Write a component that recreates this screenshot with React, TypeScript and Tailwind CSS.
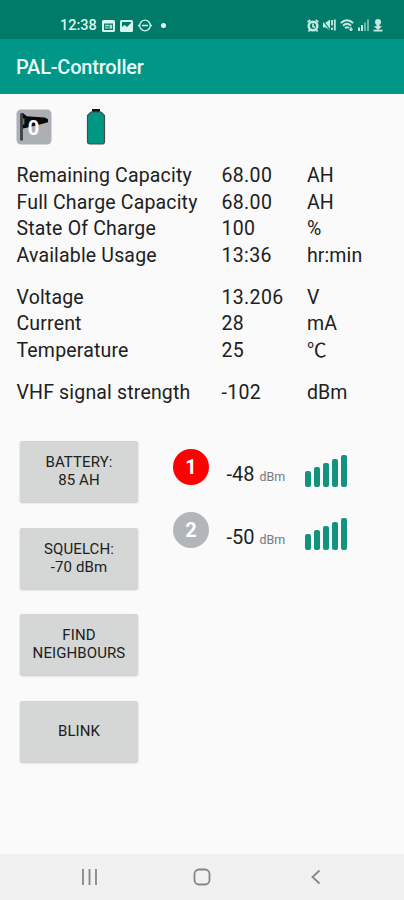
import React from "react";

type Reading = { label: string; value: string; unit: string };

const readings: Reading[][] = [
  [
    { label: "Remaining Capacity", value: "68.00", unit: "AH" },
    { label: "Full Charge Capacity", value: "68.00", unit: "AH" },
    { label: "State Of Charge", value: "100", unit: "%" },
    { label: "Available Usage", value: "13:36", unit: "hr:min" },
  ],
  [
    { label: "Voltage", value: "13.206", unit: "V" },
    { label: "Current", value: "28", unit: "mA" },
    { label: "Temperature", value: "25", unit: "℃" },
  ],
  [{ label: "VHF signal strength", value: "-102", unit: "dBm" }],
];

const buttons: string[][] = [
  ["BATTERY:", "85 AH"],
  ["SQUELCH:", "-70 dBm"],
  ["FIND", "NEIGHBOURS"],
  ["BLINK"],
];

function StatusBar() {
  return (
    <header className="flex h-[39px] items-end justify-between bg-[#007a69] pb-[5px] pl-[60px] pr-[21px] text-[#d8f5ee]">
      <div className="flex h-[17px] items-center">
        <span className="w-[42px] text-[14.5px] font-medium leading-[17px]">12:38</span>
        <svg className="h-[12px] w-[13px]" viewBox="0 0 13 12">
          <path fill="currentColor" fillRule="evenodd" d="M1.500 0h10Q13 0 13 1.500v9Q13 12 11.500 12h-10Q0 12 0 10.500v-9Q0 0 1.500 0ZM2 3.500v6.500h9V3.500Z" />
          <path fill="currentColor" opacity=".8" d="M3 4.800h4v1.400H3ZM3 7.300h3.500v1.300H3ZM7.500 4.800h2.700v4H7.500Z" />
        </svg>
        <svg className="ml-[5px] h-[12px] w-[13px]" viewBox="0 0 13 12">
          <path fill="currentColor" fillRule="evenodd" d="M1.500 0h10Q13 0 13 1.500v9Q13 12 11.500 12h-10Q0 12 0 10.500v-9Q0 0 1.500 0ZM2 2v5l2.500-2L7 7l4-4V2Z" />
        </svg>
        <svg className="ml-[5px] h-[13px] w-[14px]" viewBox="0 0 14 13" fill="none" stroke="currentColor">
          <circle cx="7" cy="6.500" r="5.300" strokeWidth="1.300" />
          <path d="M4 6.500h6M0 6.500h2M12 6.500h2" strokeWidth="1.600" />
        </svg>
        <span className="ml-[9px] size-[5px] rounded-full bg-[#e6fbf6]" />
      </div>
      <div className="flex h-[18px] items-center gap-[4px] text-[#c5eae2]">
        <svg className="h-[13px] w-[12px]" viewBox="0 0 12 13">
          <circle cx="6" cy="7" r="4.300" fill="none" stroke="currentColor" strokeWidth="2.500" />
          <path d="M.6 3 3.300.8M11.400 3 8.700.8M1.500 12.500l1.500-2M10.500 12.500l-1.500-2M6 4.500v3l2 .6" fill="none" stroke="currentColor" strokeWidth="1.700" />
        </svg>
        <svg className="h-[12px] w-[13px]" viewBox="0 0 13 12">
          <path d="M0 3.500h3L7 .5v11l-4-3H0Z" fill="currentColor" />
          <path d="M0 1.500 7 11" stroke="#007a69" strokeWidth="1.200" />
          <path d="M9 1v5.500M11.800.5v11M9 8.500V11" stroke="currentColor" strokeWidth="1.800" />
        </svg>
        <svg className="h-[12px] w-[14px]" viewBox="0 0 14 12" fill="none" stroke="currentColor" strokeWidth="1.900">
          <path d="M.8 4.200C4.500.2 9.500.2 13.200 4.200M3 6.700c2.500-2.400 5.500-2.400 8 0M5 9c1.200-1 2.800-1 4 0" />
          <path d="M11 8v3.500M9.500 10l1.500 1.500 1.500-1.500" strokeWidth="1.300" />
        </svg>
        <svg className="h-[12px] w-[11px]" viewBox="0 0 11 12" fill="currentColor">
          <path d="M0 8.500h2V12H0ZM3 6h2v6H3Z" />
          <path d="M6 3.500h2V12H6ZM9 .5h2V12H9Z" opacity=".55" />
        </svg>
        <svg className="h-[13px] w-[10px]" viewBox="0 0 10 13" fill="currentColor">
          <circle cx="5" cy="3" r="3" />
          <path d="M3.500 5h3v2L9 7.500 5 11 1 7.500 3.500 7ZM.5 10.800h9v1.700h-9Z" />
        </svg>
      </div>
    </header>
  );
}

function WindIcon() {
  return (
    <svg className="h-[36px] w-[36px]" viewBox="0 0 36 36">
      <rect x=".5" y=".5" width="35" height="35" rx="4.500" fill="#acb0b5" />
      <path d="M5.500 4.500v27" stroke="#3c3f42" strokeWidth="2.800" />
      <path d="M4.500 4h2.300l4 3.200 18 1.200 3.200 1.900v3L22 16l-11.300 2.700-3.800.8V5Z" fill="#090a0a" />
      <path d="M6.800 9.500h1.600v6H6.800Z" fill="#75797d" />
      <text x="17.500" y="25.500" textAnchor="middle" fontFamily="Roboto, sans-serif" fontWeight="700" fontSize="20" fill="#fff">0</text>
    </svg>
  );
}

function BatteryIcon() {
  return (
    <svg className="h-[36px] w-[20px]" viewBox="0 0 20 36">
      <path d="M6 0h8v4H6Z" fill="#101817" />
      <path d="M5 3h10l3.500 3.500v26q0 2.500-2.500 2.500H4q-2.500 0-2.500-2.500v-26Z" fill="#009684" stroke="#424e4b" strokeWidth="1.200" />
    </svg>
  );
}

function Channel({ id, level, active }: { id: number; level: string; active: boolean }) {
  return (
    <div className="flex h-[63px] items-start">
      <div className={`flex size-[36px] items-center justify-center rounded-full text-[20px] font-bold text-white ${active ? "bg-[#ff0000]" : "bg-[#b2b6bb]"}`}>
        {id}
      </div>
      <div className="ml-[17.500px] flex w-[78px] items-baseline whitespace-nowrap pt-[13px] leading-[25px]">
        <span className="w-[33px] text-[20px] text-[#202222]">{level}</span>
        <span className="text-[12.500px] text-[#777979]">dBm</span>
      </div>
      <div className="flex h-[38px] items-end gap-[3px]">
        <span className="h-[16px] w-[6.200px] rounded-[2px] bg-[#13937f]" />
        <span className="h-[20px] w-[6.200px] rounded-[2px] bg-[#13937f]" />
        <span className="h-[24px] w-[6.200px] rounded-[2px] bg-[#13937f]" />
        <span className="h-[28px] w-[6.200px] rounded-[2px] bg-[#13937f]" />
        <span className="h-[32px] w-[6.200px] rounded-[2px] bg-[#13937f]" />
      </div>
    </div>
  );
}

export default function App() {
  return (
    <div className="flex h-[900px] w-[404px] flex-col overflow-hidden bg-[#fafafa] font-[Roboto,'Noto_Sans_CJK_JP',sans-serif] text-[#202020]">
      <StatusBar />
      <div className="flex h-[55px] shrink-0 items-center bg-[#009688] pl-[16px] text-[20px] font-medium tracking-[-0.200px] text-[#e9fbf8]">
        PAL-Controller
      </div>
      <main className="flex flex-1 flex-col">
        <div className="flex h-[69px] items-start gap-[34px] pl-[16px] pt-[15px]">
          <WindIcon />
          <BatteryIcon />
        </div>
        <div className="flex h-[276px] flex-col gap-[15.500px] pl-[16.500px] text-[19.500px] leading-[26.600px] tracking-[0.350px]">
          {readings.map((group, i) => (
            <div key={i}>
              {group.map((r) => (
                <div key={r.label} className="grid h-[26.600px] grid-cols-[205px_85.500px_1fr] whitespace-nowrap">
                  <span className="tracking-[0.170px]">{r.label}</span>
                  <span>{r.value}</span>
                  <span className="tracking-[0.100px]">{r.unit}</span>
                </div>
              ))}
            </div>
          ))}
        </div>
        <div className="flex pl-[20px] pt-[2px]">
          <div className="flex w-[118px] flex-col gap-[25.700px]">
            {buttons.map((lines) => (
              <button key={lines[0]} className="flex h-[61px] flex-col items-center justify-center rounded-[2px] bg-[#d5d7d6] pb-[1px] text-[15px] leading-[18px] tracking-[0.100px] shadow-[0_1px_2px_rgba(0,0,0,0.22)]">
                {lines.map((line) => (
                  <span key={line}>{line}</span>
                ))}
              </button>
            ))}
          </div>
          <div className="ml-[35px] pt-[8px]">
            <Channel id={1} level="-48" active />
            <Channel id={2} level="-50" active={false} />
          </div>
        </div>
      </main>
      <nav className="flex h-[46px] shrink-0 items-center bg-[#f0f0f0] pl-[81px] text-[#858585]">
        <svg className="h-[16px] w-[17px]" viewBox="0 0 17 16" stroke="currentColor" strokeWidth="1.800">
          <path d="M2 0v16M8.500 0v16M15 0v16" />
        </svg>
        <svg className="ml-[95px] size-[18px]" viewBox="0 0 18 18" fill="none" stroke="currentColor" strokeWidth="1.800">
          <rect x="1.500" y="1.500" width="15" height="15" rx="4.500" />
        </svg>
        <svg className="ml-[100px] h-[16px] w-[10px]" viewBox="0 0 10 16" fill="none" stroke="currentColor" strokeWidth="1.800">
          <path d="M8.500 1.500 1.500 8l7 6.500" />
        </svg>
      </nav>
    </div>
  );
}
